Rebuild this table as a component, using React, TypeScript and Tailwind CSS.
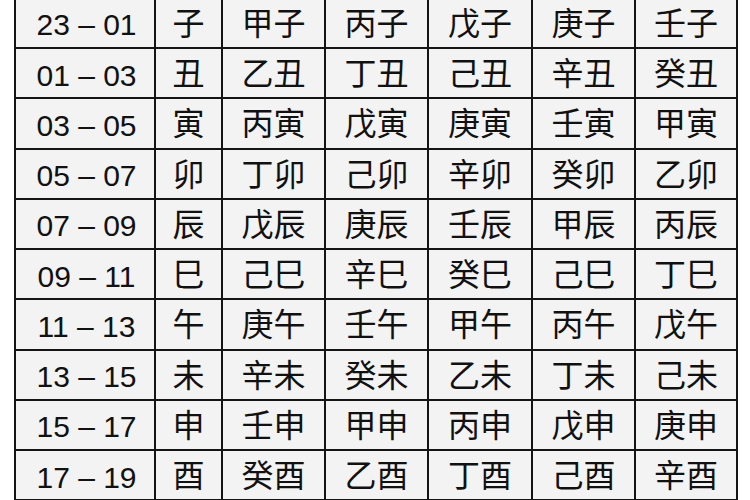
const rows: string[][] = [
  ['23 – 01', '子', '甲子', '丙子', '戊子', '庚子', '壬子'],
  ['01 – 03', '丑', '乙丑', '丁丑', '己丑', '辛丑', '癸丑'],
  ['03 – 05', '寅', '丙寅', '戊寅', '庚寅', '壬寅', '甲寅'],
  ['05 – 07', '卯', '丁卯', '己卯', '辛卯', '癸卯', '乙卯'],
  ['07 – 09', '辰', '戊辰', '庚辰', '壬辰', '甲辰', '丙辰'],
  ['09 – 11', '巳', '己巳', '辛巳', '癸巳', '己巳', '丁巳'],
  ['11 – 13', '午', '庚午', '壬午', '甲午', '丙午', '戊午'],
  ['13 – 15', '未', '辛未', '癸未', '乙未', '丁未', '己未'],
  ['15 – 17', '申', '壬申', '甲申', '丙申', '戊申', '庚申'],
  ['17 – 19', '酉', '癸酉', '乙酉', '丁酉', '己酉', '辛酉'],
];

export default function App() {
  return (
    <div className="w-[750px] h-[500px] overflow-hidden bg-white">
      <div className="ml-[14px] mt-[-3.25px] w-[724px] grid grid-cols-[138px_65px_101px_101px_102px_101px_100px] auto-rows-[48.25px] gap-[2px] p-[2px] bg-[#141414]">
        {rows.map((row, i) =>
          row.map((cell, j) => (
            <div
              key={`${i}-${j}`}
              className={
                j === 0
                  ? "bg-[#f3f3f3] flex items-center justify-center pt-[5px] pl-[3px] text-[30px] leading-none text-[#111] font-['Liberation_Sans',sans-serif] whitespace-pre"
                  : "bg-[#f3f3f3] flex items-center justify-center pb-[4px] text-[32px] leading-none text-[#111] font-['Noto_Sans_CJK_SC',sans-serif]"
              }
            >
              {cell}
            </div>
          ))
        )}
      </div>
    </div>
  );
}
